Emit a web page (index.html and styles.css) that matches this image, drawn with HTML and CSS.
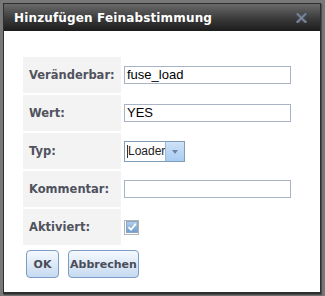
FILE: index.html
```html
<!DOCTYPE html>
<html>
<head>
<meta charset="utf-8">
<link rel="stylesheet" href="styles.css">
</head>
<body>
<div class="dialog">
  <div class="titlebar">
    <span class="title">Hinzufügen Feinabstimmung</span>
    <svg class="close" width="11" height="10" viewBox="0 0 11 10">
      <path d="M1.5 1 L9.5 9 M9.5 1 L1.5 9" stroke="#4c5564" stroke-width="3.6" stroke-linecap="square"/>
      <path d="M1.5 1 L9.5 9 M9.5 1 L1.5 9" stroke="#7e8a9a" stroke-width="1.6" stroke-linecap="square"/>
    </svg>
  </div>
  <div class="body">
    <div class="form">
      <div class="label">Veränderbar:</div>
      <div class="value"><div class="input">fuse_load</div></div>
      <div class="label">Wert:</div>
      <div class="value"><div class="input">YES</div></div>
      <div class="label">Typ:</div>
      <div class="value">
        <div class="select">
          <div class="select-text"><span class="caret"></span>Loader</div>
          <div class="select-btn"><span class="arrow"></span></div>
        </div>
      </div>
      <div class="label">Kommentar:</div>
      <div class="value"><div class="input"></div></div>
      <div class="label">Aktiviert:</div>
      <div class="value">
        <div class="checkbox">
          <svg width="12" height="12" viewBox="0 0 12 12">
            <defs>
              <linearGradient id="cb" x1="0" y1="0" x2="0" y2="1">
                <stop offset="0" stop-color="#b4d0ec"/>
                <stop offset="1" stop-color="#6b9ccc"/>
              </linearGradient>
            </defs>
            <rect x="0.5" y="0.5" width="11" height="11" fill="url(#cb)" stroke="#8aa6c6"/>
            <path d="M2.5 6.2 L5 8.7 L9.8 2.8" fill="none" stroke="#ffffff" stroke-width="1.8"/>
          </svg>
        </div>
      </div>
    </div>
    <div class="buttons">
      <button class="btn btn-ok">OK</button>
      <button class="btn btn-cancel">Abbrechen</button>
    </div>
  </div>
</div>
</body>
</html>
```

FILE: styles.css
```css
html, body {
  margin: 0;
  padding: 0;
}
body {
  width: 325px;
  height: 296px;
  background: #787878;
  padding: 3px 0 0 3px;
  box-sizing: border-box;
  overflow: hidden;
}
.dialog {
  width: 318px;
  height: 291px;
  background: #ffffff;
  border: 1px solid #2e2e2e;
  border-bottom-width: 2px;
  box-sizing: border-box;
  box-shadow: 1px 1px 1px rgba(0,0,0,0.35);
  display: flex;
  flex-direction: column;
}
.titlebar {
  height: 27px;
  flex: none;
  background: linear-gradient(#6a6a6a, #3a3a3a 55%, #1c1c1c);
  display: flex;
  align-items: center;
  justify-content: space-between;
  padding: 0 13px 0 10px;
}
.title {
  color: #ffffff;
  font-family: "DejaVu Sans", Verdana, sans-serif;
  font-weight: bold;
  font-size: 12px;
  letter-spacing: 0.15px;
}
.close {
  display: block;
  margin-top: 1px;
}
.body {
  padding: 26px 0 0 19px;
}
.form {
  display: grid;
  grid-template-columns: 98px 168px;
  grid-auto-rows: 36px;
  row-gap: 2px;
  column-gap: 2px;
}
.label {
  background: #f3f3f3;
  color: #50525e;
  font-family: "DejaVu Sans", Verdana, sans-serif;
  font-weight: bold;
  font-size: 11.5px;
  display: flex;
  align-items: center;
  padding-left: 6px;
}
.value {
  display: flex;
  align-items: center;
  padding-left: 1px;
}
.input {
  width: 167px;
  height: 18px;
  box-sizing: border-box;
  border: 1px solid #a9b3c6;
  font-family: "Liberation Sans", Arial, sans-serif;
  font-size: 13px;
  line-height: 16px;
  padding-left: 2px;
  color: #000000;
}
.select {
  display: flex;
  height: 21px;
  width: 61px;
  box-sizing: border-box;
  border: 1px solid #7f9db9;
  margin-top: 1px;
}
.select-text {
  flex: 1;
  font-family: "Liberation Sans", Arial, sans-serif;
  font-size: 12px;
  line-height: 19px;
  color: #222;
  padding-left: 2px;
  display: flex;
  align-items: center;
}
.caret {
  display: inline-block;
  width: 1px;
  height: 13px;
  background: #333;
}
.select-btn {
  width: 20px;
  background: linear-gradient(#cfe2f8, #a8cbf2);
  border-left: 1px solid #9fb9d6;
  display: flex;
  align-items: center;
  justify-content: center;
}
.arrow {
  width: 0;
  height: 0;
  border-left: 3.5px solid transparent;
  border-right: 3.5px solid transparent;
  border-top: 4px solid #6d84a8;
}
.checkbox {
  width: 15px;
  height: 15px;
  box-sizing: border-box;
  border: 1px solid #b4b4b4;
  display: flex;
  align-items: center;
  justify-content: center;
  background: #ffffff;
}
.checkbox svg {
  display: block;
}
.buttons {
  display: flex;
  gap: 9px;
  padding: 5px 0 0 3px;
}
.btn {
  height: 28px;
  box-sizing: border-box;
  border: 1px solid #7b9cc4;
  border-radius: 4px;
  background: linear-gradient(#f5f9fd, #dbe8f6 55%, #c5daf0);
  color: #4a4c58;
  font-family: "DejaVu Sans", Verdana, sans-serif;
  font-weight: bold;
  font-size: 11px;
  padding: 0;
  cursor: pointer;
}
.btn-ok {
  width: 33px;
}
.btn-cancel {
  width: 71px;
}
```
